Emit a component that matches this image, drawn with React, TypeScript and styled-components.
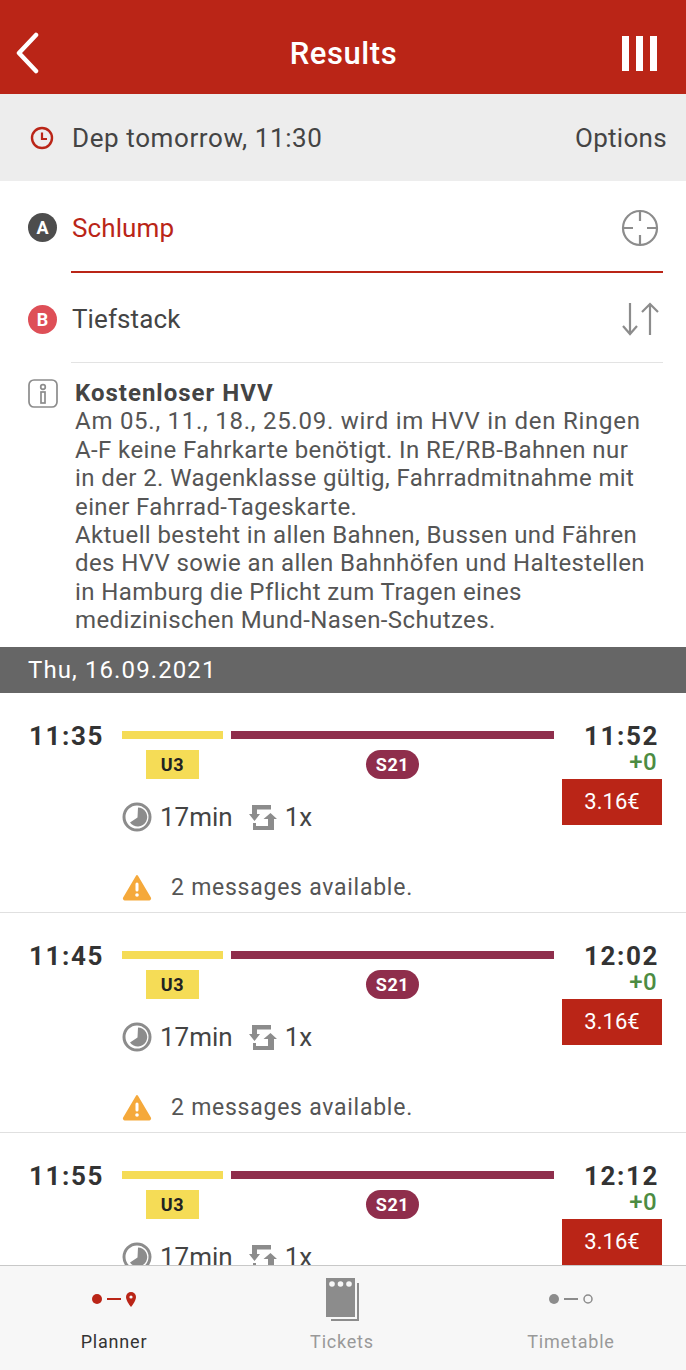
import React from "react";
import styled, { createGlobalStyle } from "styled-components";

const RED = "#ba2517";

const GlobalStyle = createGlobalStyle`
  html, body {
    margin: 0;
    padding: 0;
    background: #fff;
  }
  body {
    font-family: Roboto, "Liberation Sans", sans-serif;
    color: #444;
  }
`;

type Connection = { dep: string; arr: string };

const connections: Connection[] = [
  { dep: "11:35", arr: "11:52" },
  { dep: "11:45", arr: "12:02" },
  { dep: "11:55", arr: "12:12" }
];

const infoLines = [
  "Am 05., 11., 18., 25.09. wird im HVV in den Ringen",
  "A-F keine Fahrkarte benötigt. In RE/RB-Bahnen nur",
  "in der 2. Wagenklasse gültig, Fahrradmitnahme mit",
  "einer Fahrrad-Tageskarte.",
  "Aktuell besteht in allen Bahnen, Bussen und Fähren",
  "des HVV sowie an allen Bahnhöfen und Haltestellen",
  "in Hamburg die Pflicht zum Tragen eines",
  "medizinischen Mund-Nasen-Schutzes."
];

const ConnectionCard = ({ dep, arr }: Connection) => (
  <Card>
    <MainRow>
      <DepTime>{dep}</DepTime>
      <Route>
        <Segments>
          <Segment $width={101}>
            <Bar $color="#f5dc56" />
            <Badge>U3</Badge>
          </Segment>
          <Segment $width={323}>
            <Bar $color="#8f2e4c" />
            <Badge $color="#8f2e4c" $text="#fff" $round>
              S21
            </Badge>
          </Segment>
        </Segments>
        <Stats>
          <svg width="30" height="30" viewBox="0 0 30 30">
            <circle cx="15" cy="15" r="13" fill="none" stroke="#8c8c8c" strokeWidth="3" />
            <path d="M16 5.500a9.500 9.500 0 1 1-8 15L15.500 15.500z" fill="#8c8c8c" />
          </svg>
          <StatText>17min</StatText>
          <SwapIcon width="28" height="26" viewBox="0 0 28 26">
            <path
              d="M3 1h19v4.500H8V10h3L5.500 17 0 10h3zM4 26V19h3v3h12v-7h-4.500L21.500 9 28 15h-3v11z"
              fill="#8c8c8c"
            />
          </SwapIcon>
          <StatText>1x</StatText>
        </Stats>
      </Route>
      <Fare>
        <ArrTime>{arr}</ArrTime>
        <Delay>+0</Delay>
        <Price>3.16€</Price>
      </Fare>
    </MainRow>
    <Warning>
      <svg width="30" height="27" viewBox="0 0 30 27">
        <path
          d="M15 2 L28 24 a1 1 0 0 1-1 1.500 H3 a1 1 0 0 1-1-1.500z"
          fill="#f5a93b"
          stroke="#f5a93b"
          strokeWidth="2"
          strokeLinejoin="round"
        />
        <rect x="13.500" y="8.500" width="3" height="9" rx="1.500" fill="#fff" />
        <circle cx="15" cy="21" r="1.800" fill="#fff" />
      </svg>
      <WarningText>2 messages available.</WarningText>
    </Warning>
  </Card>
);

export default function App() {
  return (
    <>
      <GlobalStyle />
      <Screen>
        <Header>
          <BackIcon width="30" height="42" viewBox="0 0 30 42">
            <path
              d="M24 3 L7 21 L24 39"
              fill="none"
              stroke="#fff"
              strokeWidth="4.500"
              strokeLinecap="round"
              strokeLinejoin="round"
            />
          </BackIcon>
          <HeaderTitle>Results</HeaderTitle>
          <MenuBars>
            <MenuBar />
            <MenuBar />
            <MenuBar />
          </MenuBars>
        </Header>
        <Scroll>
          <TimeBar>
            <svg width="24" height="24" viewBox="0 0 24 24">
              <circle cx="12" cy="12" r="10" fill="none" stroke={RED} strokeWidth="2.400" />
              <path d="M12 6.500V13H17" fill="none" stroke={RED} strokeWidth="2.200" />
            </svg>
            <TimeLabel>Dep tomorrow, 11:30</TimeLabel>
            <OptionsLabel>Options</OptionsLabel>
          </TimeBar>
          <StopRow>
            <StopMarker $color="#4d4d4d">A</StopMarker>
            <StopBody $active>
              <StopName $active>Schlump</StopName>
              <svg width="38" height="38" viewBox="0 0 38 38">
                <g fill="none" stroke="#8c8c8c" strokeWidth="2.200">
                  <circle cx="19" cy="19" r="17" />
                  <path d="M19 2v10M19 26v10M2 19h10M26 19h10" />
                </g>
              </svg>
            </StopBody>
          </StopRow>
          <StopRow>
            <StopMarker $color="#de4f57">B</StopMarker>
            <StopBody>
              <StopName>Tiefstack</StopName>
              <svg width="38" height="36" viewBox="0 0 38 36">
                <g fill="none" stroke="#8c8c8c" strokeWidth="2.200">
                  <path d="M9 2v31M2 25l7 8 7-8" />
                  <path d="M29 34V3M21 11l8-8 8 8" />
                </g>
              </svg>
            </StopBody>
          </StopRow>
          <Info>
            <svg width="30" height="30" viewBox="0 0 30 30">
              <g fill="none" stroke="#8c8c8c" strokeWidth="1.700">
                <rect x="1" y="1" width="28" height="27" rx="5" />
                <circle cx="15" cy="8" r="2.300" />
                <rect x="13" y="13" width="4" height="11" />
              </g>
            </svg>
            <InfoText>
              <InfoTitle>Kostenloser HVV</InfoTitle>
              {infoLines.map((line, i) => (
                <InfoLine key={line} $wide={i === 0}>
                  {line}
                </InfoLine>
              ))}
            </InfoText>
          </Info>
          <DateBand>Thu, 16.09.2021</DateBand>
          {connections.map((c) => (
            <ConnectionCard key={c.dep} {...c} />
          ))}
        </Scroll>
        <TabBar>
          <Tab>
            <TabIcon>
              <svg width="46" height="22" viewBox="0 0 46 22">
                <circle cx="6" cy="11" r="5" fill={RED} />
                <path d="M16 11h14" stroke={RED} strokeWidth="2" />
                <path
                  d="M40 4a5 5 0 0 1 5 5c0 4-5 10-5 10s-5-6-5-10a5 5 0 0 1 5-5z"
                  fill={RED}
                />
                <circle cx="40" cy="9" r="1.600" fill="#f7f7f7" />
              </svg>
            </TabIcon>
            <TabLabel $active>Planner</TabLabel>
          </Tab>
          <Tab>
            <TabIcon>
              <svg width="36" height="44" viewBox="0 0 36 44">
                <path d="M33 6h2v38H7v-2h26z" fill="#8c8c8c" />
                <path d="M2 1h29v39H2z" fill="#8c8c8c" />
                <circle cx="8" cy="7" r="2.800" fill="#f7f7f7" />
                <circle cx="16.500" cy="7" r="2.800" fill="#f7f7f7" />
                <circle cx="25" cy="7" r="2.800" fill="#f7f7f7" />
              </svg>
            </TabIcon>
            <TabLabel>Tickets</TabLabel>
          </Tab>
          <Tab>
            <TabIcon>
              <svg width="46" height="22" viewBox="0 0 46 22">
                <circle cx="6" cy="11" r="5" fill="#8c8c8c" />
                <path d="M16 11h14" stroke="#8c8c8c" strokeWidth="2" />
                <circle cx="40" cy="11" r="4" fill="none" stroke="#8c8c8c" strokeWidth="1.500" />
              </svg>
            </TabIcon>
            <TabLabel>Timetable</TabLabel>
          </Tab>
        </TabBar>
      </Screen>
    </>
  );
}

const Screen = styled.div`
  width: 686px;
  height: 1370px;
  display: flex;
  flex-direction: column;
  overflow: hidden;
  background: #fff;
`;

const Header = styled.header`
  flex: none;
  height: 94px;
  box-sizing: border-box;
  padding: 12px 29px 0 12px;
  background: ${RED};
  display: grid;
  grid-template-columns: 1fr auto 1fr;
  align-items: center;
`;

const BackIcon = styled.svg`
  justify-self: start;
`;

const HeaderTitle = styled.h1`
  margin: 0 0 0 18px;
  font-size: 31px;
  font-weight: 500;
  letter-spacing: 0.6px;
  color: #fff;
`;

const MenuBars = styled.div`
  justify-self: end;
  display: flex;
  gap: 7px;
`;

const MenuBar = styled.span`
  width: 7px;
  height: 35px;
  background: #fff;
`;

const Scroll = styled.main`
  flex: 1;
  min-height: 0;
  overflow: hidden;
`;

const TimeBar = styled.div`
  height: 87px;
  background: #ededed;
  display: flex;
  align-items: center;
  padding: 0 19px 0 30px;
`;

const TimeLabel = styled.span`
  margin-left: 18px;
  font-size: 26px;
  letter-spacing: 0.6px;
  color: #444;
`;

const OptionsLabel = styled.span`
  margin-left: auto;
  font-size: 26px;
  letter-spacing: 0.3px;
  color: #444;
`;

const StopRow = styled.div`
  display: flex;
  align-items: stretch;
  padding: 0 23px 0 28px;
`;

const StopMarker = styled.span<{ $color: string }>`
  flex: none;
  width: 29px;
  height: 29px;
  margin-top: 32px;
  margin-right: 14px;
  border-radius: 50%;
  background: ${(p) => p.$color};
  color: #fff;
  font-size: 18px;
  font-weight: 700;
  display: flex;
  align-items: center;
  justify-content: center;
`;

const StopBody = styled.div<{ $active?: boolean }>`
  flex: 1;
  height: ${(p) => (p.$active ? 92 : 90)}px;
  box-sizing: border-box;
  display: flex;
  align-items: center;
  justify-content: space-between;
  padding: ${(p) => (p.$active ? 3 : 2)}px 4px 0 1px;
  border-bottom: ${(p) => (p.$active ? `2px solid ${RED}` : "1.500px solid #e3e3e3")};
`;

const StopName = styled.span<{ $active?: boolean }>`
  font-size: 26px;
  letter-spacing: 0.1px;
  color: ${(p) => (p.$active ? RED : "#444")};
`;

const Info = styled.section`
  height: 284px;
  box-sizing: border-box;
  display: flex;
  padding: 16px 23px 0 28px;
`;

const InfoText = styled.div`
  margin-left: 17px;
  font-size: 24px;
  line-height: 28.400px;
  letter-spacing: 0.4px;
  color: #555;
  white-space: nowrap;
`;

const InfoTitle = styled.div`
  font-weight: 700;
  letter-spacing: 1px;
  color: #444;
`;

const InfoLine = styled.div<{ $wide?: boolean }>`
  letter-spacing: ${(p) => (p.$wide ? 0.74 : 0.4)}px;
`;

const DateBand = styled.div`
  height: 46px;
  background: #666;
  color: #fff;
  display: flex;
  align-items: center;
  padding-left: 28px;
  font-size: 24px;
  letter-spacing: 1.1px;
`;

const Card = styled.article`
  height: 220px;
  box-sizing: border-box;
  border-bottom: 1px solid #e0e0e0;
`;

const MainRow = styled.div`
  display: flex;
`;

const DepTime = styled.div`
  width: 122px;
  box-sizing: border-box;
  padding: 28px 0 0 29px;
  font-size: 26px;
  line-height: 30px;
  font-weight: 700;
  letter-spacing: 1.6px;
  color: #333;
`;

const Route = styled.div`
  width: 432px;
  padding-top: 38px;
`;

const Segments = styled.div`
  display: flex;
  gap: 8px;
`;

const Segment = styled.div<{ $width: number }>`
  width: ${(p) => p.$width}px;
  display: flex;
  flex-direction: column;
  align-items: center;
`;

const Bar = styled.div<{ $color: string }>`
  width: 100%;
  height: 8px;
  background: ${(p) => p.$color};
`;

const Badge = styled.span<{ $color?: string; $text?: string; $round?: boolean }>`
  margin-top: 11px;
  width: 53px;
  height: 29px;
  border-radius: ${(p) => (p.$round ? "15px" : "0")};
  background: ${(p) => p.$color || "#f5dc56"};
  color: ${(p) => p.$text || "#222"};
  font-size: 18px;
  font-weight: 700;
  letter-spacing: 0.6px;
  display: flex;
  align-items: center;
  justify-content: center;
`;

const Stats = styled.div`
  margin-top: 22px;
  height: 32px;
  display: flex;
  align-items: center;
`;

const StatText = styled.span`
  margin-left: 8px;
  font-size: 26px;
  color: #444;
`;

const SwapIcon = styled.svg`
  margin-left: 16px;
`;

const Fare = styled.div`
  width: 100px;
  margin-left: 8px;
  padding-top: 28px;
  display: flex;
  flex-direction: column;
  align-items: flex-end;
`;

const ArrTime = styled.div`
  padding-right: 3px;
  font-size: 26px;
  line-height: 30px;
  font-weight: 700;
  letter-spacing: 1.6px;
  color: #333;
`;

const Delay = styled.div`
  padding-right: 5px;
  font-size: 24px;
  line-height: 22px;
  font-weight: 500;
  letter-spacing: 0.4px;
  color: #4c8c43;
  height: 20px;
  margin-bottom: 8px;
`;

const Price = styled.div`
  width: 100px;
  height: 46px;
  padding-bottom: 2px;
  box-sizing: border-box;
  background: ${RED};
  color: #fff;
  font-size: 22px;
  display: flex;
  align-items: center;
  justify-content: center;
`;

const Warning = styled.div`
  margin-top: 38px;
  height: 32px;
  padding-left: 122px;
  display: flex;
  align-items: center;
`;

const WarningText = styled.span`
  margin-left: 19px;
  font-size: 23px;
  letter-spacing: 0.75px;
  color: #555;
`;

const TabBar = styled.nav`
  flex: none;
  height: 105px;
  box-sizing: border-box;
  border-top: 1px solid #c8c8c8;
  background: #f7f7f7;
  display: grid;
  grid-template-columns: 228px 228px 230px;
`;

const Tab = styled.div`
  display: flex;
  flex-direction: column;
  align-items: center;
`;

const TabIcon = styled.div`
  height: 65px;
  display: flex;
  align-items: center;
  justify-content: center;
`;

const TabLabel = styled.span<{ $active?: boolean }>`
  font-size: 18px;
  letter-spacing: 0.8px;
  color: ${(p) => (p.$active ? "#333" : "#999")};
`;
